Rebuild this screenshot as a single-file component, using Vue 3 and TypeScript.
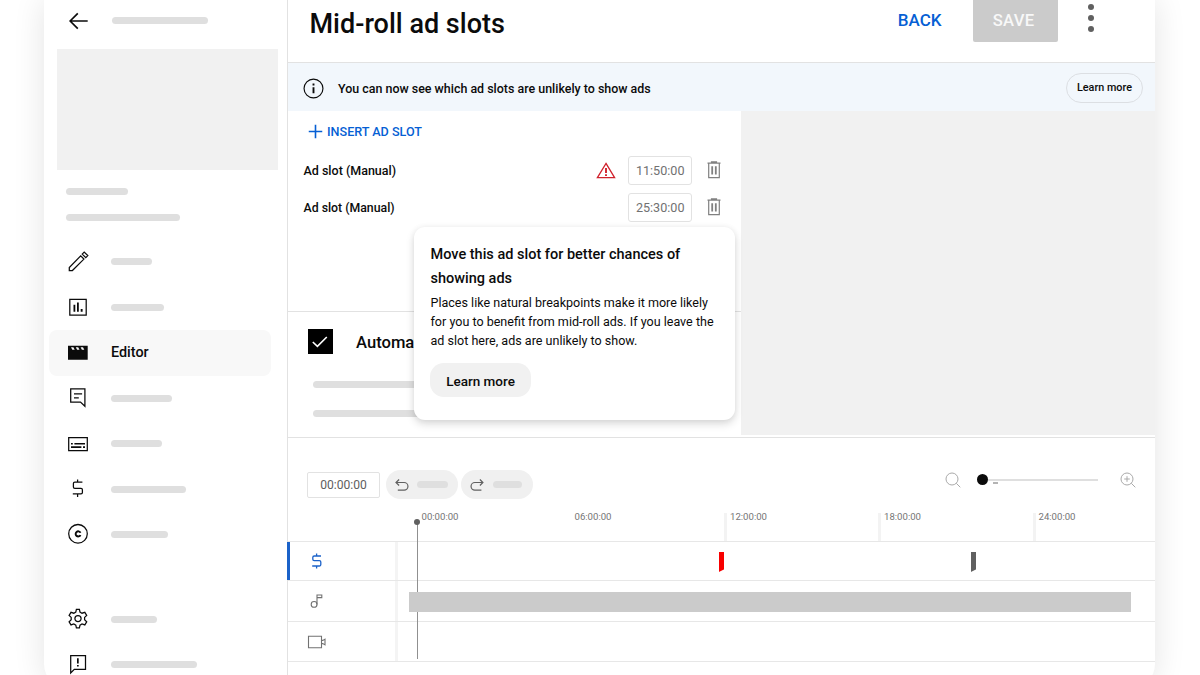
<script setup lang="ts">
import { ref } from 'vue'

interface NavItem {
  id: string
  bar?: number
  label?: string
  stroke?: string
  fill?: string
}

const mainNav: NavItem[] = [
  {
    id: 'details',
    bar: 41,
    stroke: 'M3.3 20.5v-3L14.7 5.9l3.2 3.2L6.4 20.5zM16.2 4.1l2-2 3.6 3.5-2 2z'
  },
  {
    id: 'analytics',
    bar: 53,
    stroke: 'M3.8 4.3h16.4v15.8H3.8z',
    fill: 'M7.5 9.8h1.8v7H7.5zM11 7.4h1.8v9.4H11zM14.7 13.9h1.9v2.9h-1.9z'
  },
  {
    id: 'editor',
    label: 'Editor',
    fill: 'M2 4.8h19.7v14H2zM5 6.2l1.3 2.6h2.4L7.4 6.2zM9.8 6.2l1.3 2.6h2.4l-1.3-2.6zM14.6 6.2l1.3 2.6h2.4L17 6.2z'
  },
  {
    id: 'comments',
    bar: 61,
    stroke: 'M4.7 2.8h14.2v17.5l-4.4-4.2H4.7zM8 7.8h8.1M8 11.8h4.8'
  },
  {
    id: 'subtitles',
    bar: 51,
    stroke: 'M2.7 5.7h18.6v13H2.7z',
    fill: 'M5 10.9h1.8v1.7H5zM8.4 10.9H19v1.7H8.4zM5 14.3h10.4V16H5zM17 14.3h2V16h-2z'
  },
  {
    id: 'monetization',
    bar: 75,
    stroke:
      'M16.4 5.2H8.8a1.4 1.4 0 0 0-1.4 1.4v3.3a1.4 1.4 0 0 0 1.4 1.4H15a1.4 1.4 0 0 1 1.4 1.4v2.8a1.4 1.4 0 0 1-1.4 1.4H6.8M11.6 2.4v2.8M11.6 16.9v3'
  },
  {
    id: 'copyright',
    bar: 57,
    stroke:
      'M12 1.5a9.3 9.3 0 1 1 0 18.6a9.3 9.3 0 1 1 0-18.6M14.8 9.6a2.9 2.9 0 1 0 0 2.6M14.1 9.8a2.2 2.2 0 1 0 0 2.2'
  }
]

const footerNav: NavItem[] = [
  {
    id: 'settings',
    bar: 46,
    stroke:
      'M13.4 2.3l.6 2.8 2 1.1 2.8-.9 1.9 3.1-2.1 2v2.4l2.1 2-1.9 3.1-2.8-.9-2 1.1-.6 2.8h-3l-.6-2.8-2-1.1-2.8.9-1.9-3.1 2.1-2v-2.4l-2.1-2L5 5.3l2.8.9 2-1.1.6-2.8zM12 8.5a3.1 3.1 0 1 0 0 6.2a3.1 3.1 0 1 0 0-6.2'
  },
  {
    id: 'feedback',
    bar: 86,
    stroke: 'M4.7 2.6h14.8v13.8H8.3l-3.6 3.5z',
    fill: 'M11 5.2h1.7v5.3H11zM11 11.9h1.7v1.7H11z'
  }
]

const adSlots = [
  { id: 1, time: '11:50:00', warning: true },
  { id: 2, time: '25:30:00', warning: false }
]

const ticks = [
  { label: '00:00:00', left: 133.5, line: false },
  { label: '06:00:00', left: 286.5, line: false },
  { label: '12:00:00', left: 442, line: true },
  { label: '18:00:00', left: 596, line: true },
  { label: '24:00:00', left: 750.5, line: true }
]

const markers = [
  { left: 320.5, color: '#f80000' },
  { left: 572.5, color: '#606060' }
]

const automatic = ref(true)
</script>

<template>
  <div class="page">
    <div class="studio">
      <aside class="sidebar">
        <div class="sidebar-head">
          <svg class="back-icon" viewBox="0 0 20 18">
            <path d="M8.8 1.3 1.1 9l7.7 7.7M1.1 9h17.6" />
          </svg>
          <span class="bar head-bar"></span>
        </div>
        <div class="thumbnail"></div>
        <div class="meta">
          <span class="bar meta-short"></span>
          <span class="bar meta-long"></span>
        </div>
        <nav>
          <div v-for="item in mainNav" :key="item.id" class="nav-item" :class="{ active: item.label }">
            <svg class="nav-icon" viewBox="0 0 24 24">
              <path v-if="item.stroke" class="line" :d="item.stroke" />
              <path v-if="item.fill" fill-rule="evenodd" :d="item.fill" />
            </svg>
            <span v-if="item.label" class="nav-label">{{ item.label }}</span>
            <span v-else class="bar" :style="{ width: item.bar + 'px' }"></span>
          </div>
        </nav>
        <nav class="nav-footer">
          <div v-for="item in footerNav" :key="item.id" class="nav-item">
            <svg class="nav-icon" viewBox="0 0 24 24">
              <path v-if="item.stroke" class="line" :d="item.stroke" />
              <path v-if="item.fill" :d="item.fill" />
            </svg>
            <span class="bar" :style="{ width: item.bar + 'px' }"></span>
          </div>
        </nav>
      </aside>

      <main class="main">
        <header class="header">
          <h1>Mid-roll ad slots</h1>
          <button class="btn-back">BACK</button>
          <button class="btn-save">SAVE</button>
          <div class="more"><i></i><i></i><i></i></div>
        </header>

        <div class="banner">
          <svg class="info-icon" viewBox="0 0 20 20">
            <circle cx="10" cy="10" r="9" />
            <path d="M10 8.8v5.7M10 5.2v2" />
          </svg>
          <span class="banner-text">You can now see which ad slots are unlikely to show ads</span>
          <button class="banner-btn">Learn more</button>
        </div>

        <div class="content">
          <section class="panel">
            <div class="slots">
              <button class="insert">
                <svg viewBox="0 0 16 16"><path d="M8 .8v14.4M.8 8h14.4" /></svg>
                <span>INSERT AD SLOT</span>
              </button>
              <div v-for="slot in adSlots" :key="slot.id" class="slot">
                <span class="slot-name" :class="{ flagged: slot.warning }">Ad slot (Manual)</span>
                <svg v-if="slot.warning" class="warning" viewBox="0 0 20 17">
                  <path d="M10 1.4 18.6 15.6H1.4z" />
                  <path class="bang" d="M10 6v5M10 12.2v1.8" />
                </svg>
                <span class="time">{{ slot.time }}</span>
                <svg class="trash" viewBox="0 0 14 18">
                  <path d="M.5 2.2h13M4.5 2V.8h5V2M1.7 2.4v14.3h10.6V2.4" />
                  <path class="slats" d="M5.2 5.3v8.3M8.8 5.3v8.3" />
                </svg>
              </div>
            </div>
            <div class="automatic">
              <div class="check-row">
                <span class="checkbox" @click="automatic = !automatic">
                  <svg v-if="automatic" viewBox="0 0 25 25"><path d="M4.8 13l4.6 4.4L18.8 8" /></svg>
                </span>
                <span class="check-label">Automatic</span>
              </div>
              <span class="bar"></span>
              <span class="bar"></span>
            </div>

            <div class="popover">
              <h2>Move this ad slot for better chances of showing ads</h2>
              <p>
                Places like natural breakpoints make it more likely<br />
                for you to benefit from mid-roll ads. If you leave the<br />
                ad slot here, ads are unlikely to show.
              </p>
              <button>Learn more</button>
            </div>
          </section>
          <div class="preview"></div>
        </div>

        <section class="timeline">
          <div class="controls">
            <span class="current">00:00:00</span>
            <span class="pill">
              <svg viewBox="0 0 16 14"><path d="M5.1 1.5 2 4.5l3.1 3M2 4.5h8.1a3.8 3.8 0 0 1 0 7.7H3.8" /></svg>
              <span class="bar undo-bar"></span>
            </span>
            <span class="pill redo">
              <svg viewBox="0 0 16 14"><path d="M9.9 1.5l3 3-3 3M12.9 4.5H4.9a3.8 3.8 0 0 0 0 7.7h6.5" /></svg>
              <span class="bar redo-bar"></span>
            </span>
            <div class="zoom">
              <svg viewBox="0 0 16 16"><circle cx="7" cy="7" r="6" /><path d="M11.3 11.3 15.3 15.3" /></svg>
              <div class="slider"><span class="knob"></span><span class="step"></span></div>
              <svg viewBox="0 0 16 16">
                <circle cx="7" cy="7" r="6" />
                <path d="M11.3 11.3 15.3 15.3M7 4.2v5.6M4.2 7h5.6" />
              </svg>
            </div>
          </div>

          <div class="ruler">
            <span
              v-for="tick in ticks"
              :key="tick.label"
              class="tick"
              :class="{ lined: tick.line }"
              :style="{ left: tick.left + 'px' }"
            >{{ tick.label }}</span>
          </div>

          <div class="tracks">
            <div class="track ads">
              <div class="track-head">
                <svg viewBox="0 0 20 20" class="dollar">
                  <path d="M14 5H7.2A1.4 1.4 0 0 0 5.8 6.4v1.8a1.4 1.4 0 0 0 1.4 1.4h5.2a1.4 1.4 0 0 1 1.4 1.4v2.6a1.4 1.4 0 0 1-1.4 1.4H5.2M9.6 2.5V5M9.6 15v2.4" />
                </svg>
              </div>
              <div class="lane">
                <span
                  v-for="marker in markers"
                  :key="marker.left"
                  class="marker"
                  :style="{ left: marker.left + 'px', background: marker.color }"
                ></span>
              </div>
            </div>
            <div class="track audio">
              <div class="track-head">
                <svg viewBox="0 0 20 20">
                  <circle cx="7.1" cy="13.4" r="2.9" />
                  <path d="M10 13.4V4h4.8v2.6H10" />
                </svg>
              </div>
              <div class="lane"><span class="clip"></span></div>
            </div>
            <div class="track">
              <div class="track-head">
                <svg viewBox="0 0 20 20">
                  <path d="M1.5 4.3h13v11.4h-13zM14.5 8.4h1.3l2.2-1.3v5.8l-2.2-1.3h-1.3" />
                </svg>
              </div>
              <div class="lane"></div>
            </div>
          </div>
          <div class="playhead"></div>
        </section>
      </main>
    </div>
  </div>
</template>

<style>
body {
  margin: 0;
  overflow: hidden;
}
</style>

<style scoped>
.page {
  width: 1200px;
  height: 675px;
  overflow: hidden;
  background: #fff;
  font-family: Roboto, 'Liberation Sans', sans-serif;
  color: #0b0b0b;
}
.page * {
  box-sizing: border-box;
}
button {
  padding: 0;
  border: none;
  background: none;
  font-family: inherit;
  color: inherit;
  cursor: pointer;
}
svg {
  display: block;
  flex: none;
  fill: none;
}
.studio {
  display: flex;
  width: 1111px;
  height: 688px;
  margin-left: 44px;
  border-radius: 0 0 24px 24px;
  background: #fff;
  box-shadow: 0 0 32px rgba(0, 0, 0, 0.11);
}
.bar {
  display: block;
  flex: none;
  height: 7px;
  border-radius: 4px;
  background: #dfdfdf;
}

/* sidebar */
.sidebar {
  width: 244px;
  border-right: 1px solid #e2e2e2;
}
.sidebar-head {
  display: flex;
  align-items: center;
  height: 49px;
  padding: 0 0 8px 24.5px;
}
.back-icon {
  width: 20px;
  height: 18px;
  margin-right: 23.5px;
  stroke: #0b0b0b;
  stroke-width: 1.7;
}
.head-bar {
  width: 96px;
}
.thumbnail {
  width: 220.5px;
  height: 121px;
  margin-left: 13.4px;
  background: #f1f1f1;
}
.meta {
  height: 69px;
  padding: 18px 0 0 22px;
}
.meta-short {
  width: 62px;
  margin-bottom: 19px;
}
.meta-long {
  width: 114px;
}
.nav-item {
  display: flex;
  align-items: center;
  gap: 21.4px;
  height: 45.5px;
  margin: 0 16px 0 5px;
  padding-left: 17px;
}
.nav-item.active {
  gap: 21px;
  border-radius: 8px;
  background: #f8f8f8;
}
.nav-icon {
  width: 24px;
  height: 24px;
  fill: #0b0b0b;
}
.nav-icon .line {
  fill: none;
  stroke: #0b0b0b;
  stroke-width: 1.25;
}
.nav-label {
  font-size: 14.4px;
  font-weight: 500;
}
.nav-footer {
  margin-top: 39px;
}

/* header */
.main {
  display: flex;
  flex-direction: column;
  width: 867px;
}
.header {
  display: flex;
  align-items: flex-start;
  height: 63px;
  border-bottom: 1px solid #e2e2e2;
  padding-left: 21.5px;
}
h1 {
  margin: 8px auto 0 0;
  font-size: 27px;
  line-height: 32px;
  font-weight: 500;
}
.btn-back {
  margin: 10px 31px 0 0;
  font-size: 17px;
  line-height: 21px;
  font-weight: 500;
  color: #065fd4;
}
.btn-save {
  width: 85px;
  height: 42px;
  border-radius: 0 0 2px 2px;
  padding: 0 3px 2px 0;
  background: #cbcbcb;
  font-size: 16.6px;
  font-weight: 500;
  letter-spacing: 0.3px;
  color: #f8f8f8;
}
.more {
  display: flex;
  flex-direction: column;
  gap: 5px;
  margin: 4px 61px 0 30.5px;
}
.more i {
  width: 6px;
  height: 6px;
  border-radius: 50%;
  background: #606060;
}
.banner {
  display: flex;
  align-items: center;
  height: 48px;
  padding: 0 12px 0 15px;
  background: #f2f7fc;
}
.info-icon {
  width: 21px;
  height: 21px;
  margin: 2px 14px 0 0;
  stroke: #0b0b0b;
  stroke-width: 1.1;
}
.info-icon path {
  stroke-width: 1.8;
}
.banner-text {
  margin-top: 3px;
  font-size: 12.45px;
  font-weight: 500;
}
.banner-btn {
  width: 77px;
  height: 30px;
  margin: 1px 0 0 auto;
  border: 1px solid #dcdfe3;
  border-radius: 15px;
  padding-bottom: 1px;
  font-size: 10.8px;
  font-weight: 500;
}

/* ad slot list */
.content {
  display: flex;
  height: 327px;
  border-bottom: 1px solid #e2e2e2;
}
.panel {
  position: relative;
  width: 453.4px;
}
.preview {
  flex: 1;
  height: 324px;
  background: #f1f1f1;
}
.slots {
  height: 200px;
  padding: 10px 20.5px 0 15.5px;
}
.insert {
  display: flex;
  align-items: center;
  gap: 4.5px;
  height: 21px;
  margin: 0 0 9.4px 4px;
  font-size: 12.6px;
  font-weight: 500;
  color: #065fd4;
}
.insert svg {
  width: 15px;
  height: 15px;
  stroke: #065fd4;
  stroke-width: 1.7;
}
.slot {
  display: flex;
  align-items: center;
  height: 37.4px;
}
.slot-name {
  margin-right: auto;
  padding-top: 0.8px;
  font-size: 12.3px;
  font-weight: 500;
}
.slot-name.flagged {
  padding-top: 0;
  font-size: 12.5px;
}
.warning {
  width: 20px;
  height: 17px;
  margin-right: 12px;
  stroke: #d0212c;
  stroke-width: 1.3;
}
.warning .bang {
  stroke-width: 1.9;
}
.time {
  display: flex;
  align-items: center;
  justify-content: center;
  width: 64px;
  height: 29px;
  margin-right: 14.7px;
  border: 1px solid #e2e2e2;
  border-radius: 3px;
  font-size: 12.6px;
  color: #717171;
}
.trash {
  width: 14px;
  height: 18px;
  stroke: #808080;
  stroke-width: 1.2;
}
.trash .slats {
  stroke-width: 1.8;
}
.automatic {
  height: 126px;
  border-top: 1px solid #e2e2e2;
  padding: 17.4px 0 0 19.5px;
}
.check-row {
  display: flex;
  align-items: center;
  gap: 23.5px;
  height: 25px;
  margin-bottom: 26.6px;
}
.checkbox {
  width: 25px;
  height: 25px;
  background: #000;
}
.checkbox svg {
  stroke: #fff;
  stroke-width: 1.6;
}
.check-label {
  margin-top: 1px;
  font-size: 16.6px;
  font-weight: 500;
}
.automatic .bar {
  width: 220px;
  margin: 0 0 22px 5.5px;
}
.popover {
  position: absolute;
  top: 116px;
  left: 126px;
  width: 321.3px;
  height: 193px;
  padding: 15.5px 16px 0 16.5px;
  border-radius: 11px;
  background: #fff;
  box-shadow: 0 4px 8px rgba(0, 0, 0, 0.15), 0 0 6px rgba(0, 0, 0, 0.05);
}
.popover h2 {
  margin: 0 0 1.5px;
  font-size: 14.5px;
  line-height: 24.5px;
  font-weight: 500;
}
.popover p {
  margin: 0 0 12.5px;
  font-size: 12.55px;
  line-height: 19px;
  white-space: nowrap;
}
.popover button {
  width: 101px;
  height: 34.5px;
  margin-left: -0.5px;
  border-radius: 14px;
  padding-top: 2px;
  background: #f1f1f1;
  font-size: 13.5px;
  font-weight: 500;
}

/* timeline */
.timeline {
  position: relative;
}
.controls {
  display: flex;
  align-items: center;
  height: 75px;
  padding: 18px 19px 0 19px;
}
.current {
  width: 73px;
  height: 26px;
  margin-right: 6px;
  border: 1px solid #e2e2e2;
  border-radius: 2px;
  font-size: 12.1px;
  line-height: 25px;
  text-align: center;
  color: #606060;
}
.pill {
  display: flex;
  align-items: center;
  width: 72px;
  height: 29px;
  margin-right: 3.4px;
  padding-left: 8px;
  border-radius: 15px;
  background: #f0f0f0;
}
.pill svg {
  width: 16px;
  height: 14px;
  margin-right: 7px;
  stroke: #606060;
  stroke-width: 1.2;
}
.undo-bar {
  width: 31px;
}
.redo-bar {
  width: 29px;
}
.pill.redo {
  padding-left: 8.5px;
}
.zoom {
  display: flex;
  align-items: center;
  margin: -10px 0 0 auto;
}
.zoom svg {
  width: 16px;
  height: 16px;
  stroke: #aaa;
  stroke-width: 1;
}
.slider {
  position: relative;
  width: 115px;
  height: 2px;
  margin: 0 22.4px 0 22px;
  background: #dfdfdf;
}
.knob {
  position: absolute;
  top: -4.5px;
  left: -5.5px;
  width: 11px;
  height: 11px;
  border-radius: 50%;
  background: #0b0b0b;
}
.step {
  position: absolute;
  top: 3px;
  left: 10px;
  width: 5px;
  height: 2px;
  background: #b4b4b4;
}
.ruler {
  position: relative;
  height: 28px;
}
.tick {
  position: absolute;
  top: 0;
  height: 28px;
  font-size: 9.6px;
  line-height: 8px;
  color: #757575;
}
.tick.lined {
  margin-left: -5px;
  padding-left: 5px;
}
.tick.lined::before {
  content: '';
  position: absolute;
  top: 0;
  left: -0.8px;
  width: 3px;
  height: 28px;
  background: #f3f3f3;
}
.tracks {
  border-top: 1px solid #e7e7e7;
}
.track {
  display: flex;
  height: 40px;
  border-bottom: 1px solid #e7e7e7;
}
.track.ads {
  height: 39px;
}
.track.audio {
  height: 41px;
}
.track-head {
  display: flex;
  align-items: center;
  width: 110.4px;
  border-right: 3px solid #f4f4f4;
  padding-left: 18.5px;
}
.track-head svg {
  width: 20px;
  height: 20px;
  stroke: #717171;
  stroke-width: 1.1;
}
.ads .track-head {
  margin-left: -1px;
  width: 111.4px;
  border-left: 3px solid #1b62c9;
  padding-left: 17px;
}
.track-head .dollar {
  stroke: #1b62c9;
  stroke-width: 1.3;
}
.lane {
  position: relative;
  flex: 1;
}
.marker {
  position: absolute;
  top: 10px;
  width: 5.5px;
  height: 20px;
  clip-path: polygon(0 0, 100% 0, 100% 86%, 0 100%);
}
.clip {
  position: relative;
  z-index: 2;
  display: block;
  width: 721.5px;
  height: 20px;
  margin: 10.5px 0 0 11.1px;
  background: #cbcbcb;
}
.playhead {
  position: absolute;
  top: 84px;
  left: 129px;
  width: 1px;
  height: 137px;
  background: #909090;
}
.playhead::before {
  content: '';
  position: absolute;
  top: -3px;
  left: -3px;
  width: 6px;
  height: 6px;
  border-radius: 50%;
  background: #606060;
}
</style>
